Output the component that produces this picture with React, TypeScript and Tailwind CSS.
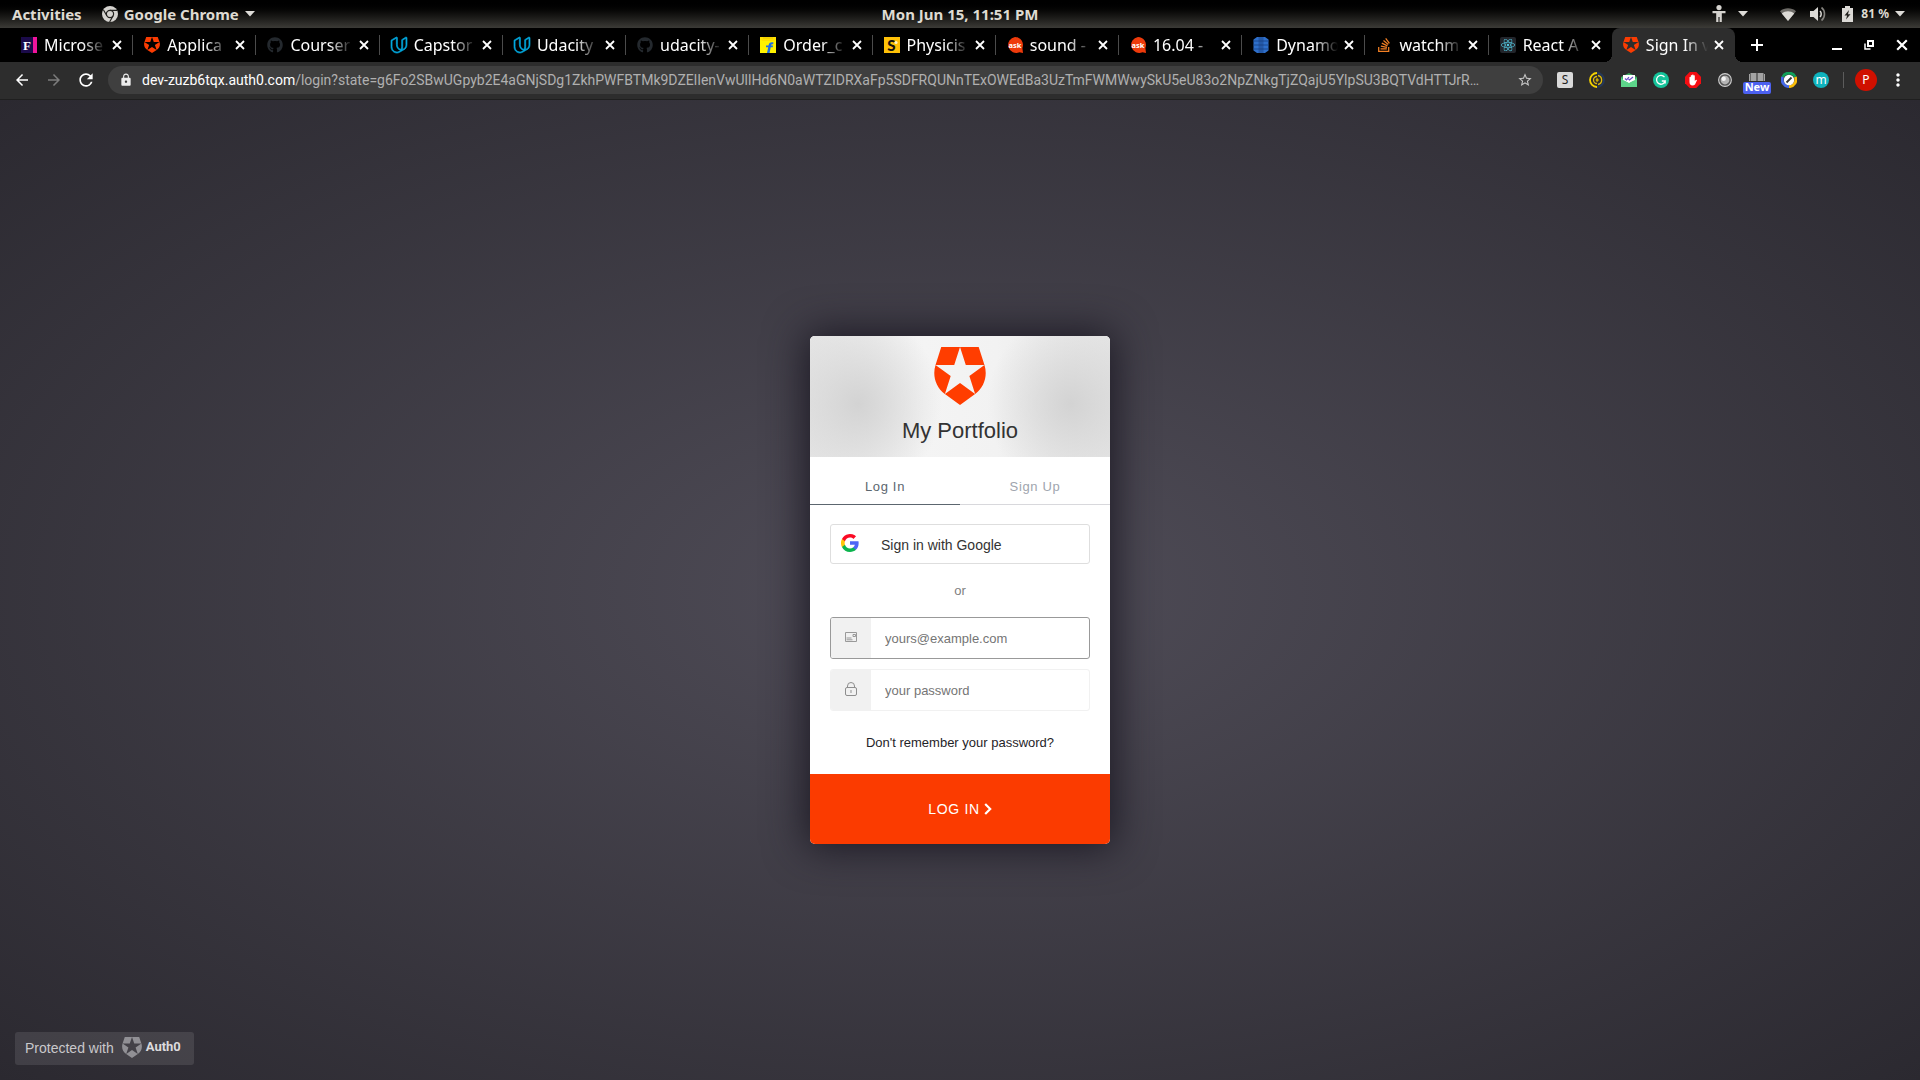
import React, { useState } from "react";
import { FaGithub, FaStackOverflow, FaReact } from "react-icons/fa";
import { SiUdacity } from "react-icons/si";
import { MdStarBorder, MdLock, MdArrowBack, MdArrowForward, MdRefresh, MdMoreVert } from "react-icons/md";

const AUTH0_PATH =
  "M21.98 7.448L19.62 0H4.347L2.02 7.448c-1.352 4.312.03 9.206 3.815 12.015L12.007 24l6.157-4.552c3.755-2.81 5.182-7.688 3.815-12.015l-6.16 4.58 2.343 7.45-6.157-4.597-6.158 4.58 2.358-7.433-6.188-4.55 7.63-.045L12.008 0l2.356 7.404 7.615.044z";

function Shield({ className }: { className?: string }) {
  return (
    <svg viewBox="1.4 0 21.2 24" preserveAspectRatio="none" className={className} aria-hidden="true">
      <path d={AUTH0_PATH} fill="currentColor" />
    </svg>
  );
}

function AskIcon() {
  return (
    <svg viewBox="0 0 16 16" className="size-4" aria-hidden="true">
      <path d="M8 0a8 8 0 1 0 4.500 15.200L16 16l-.6-5A8 8 0 0 0 8 0Z" fill="#ee3a0b" />
      <text x="8" y="10.500" textAnchor="middle" fontSize="7.500" fontWeight="700" fill="#fff" fontFamily="Noto Sans, sans-serif">ask</text>
    </svg>
  );
}

function MicrosetIcon() {
  return (
    <svg viewBox="0 0 16 16" className="size-4" aria-hidden="true">
      <rect width="12" height="16" fill="#1b0b4a" />
      <rect x="12" width="4" height="16" fill="#f0149b" />
      <text x="6" y="12.500" textAnchor="middle" fontSize="13" fontWeight="700" fill="#fff" fontFamily="Liberation Serif, serif">F</text>
    </svg>
  );
}

function FlipkartIcon() {
  return (
    <svg viewBox="0 0 16 16" className="size-4" aria-hidden="true">
      <rect width="16" height="16" fill="#fff200" />
      <path d="M0 0h16v2.500L13 4H3L0 2.500Z" fill="#ffe000" />
      <path d="M3 0.500h10v1H3z" fill="#e9c500" />
      <path d="M13.500 5.500c-3-.8-4.600.5-5 3H6v1.800h2.200L7 16h2.600l1.100-5.700h2l.4-1.800h-2c.2-1.100.8-1.500 2.100-1.200Z" fill="#1c6ee8" />
    </svg>
  );
}

function PhysicsIcon() {
  return (
    <svg viewBox="0 0 16 16" className="size-4" aria-hidden="true">
      <rect width="16" height="16" fill="#ffc107" />
      <text x="7.500" y="13.500" textAnchor="middle" fontSize="15" fontWeight="900" fill="#111" fontFamily="Lato, sans-serif">S</text>
      <circle cx="12" cy="5.500" r="1.600" fill="#fff3c4" />
    </svg>
  );
}

function DynamoIcon() {
  return (
    <svg viewBox="0 0 16 16" className="size-4" aria-hidden="true">
      <path d="M4 0h8l3.500 2.500v11L12 16H4L.5 13.500v-11Z" fill="#2e6fca" />
      <path d="M5.500 0h5v16h-5z" fill="#2459a8" />
      <path d="M0 4h16M0 8h16M0 12h16" stroke="#173f80" strokeWidth=".8" />
    </svg>
  );
}

function ChromeGlyph() {
  return (
    <svg viewBox="0 0 16 16" className="size-4" aria-hidden="true">
      <circle cx="8" cy="8" r="8" fill="#d5d3cf" />
      <circle cx="8" cy="8" r="3.600" fill="none" stroke="#22211e" strokeWidth="1.200" />
      <path d="M8 4.400h7M4.900 9.800 1.500 4M11.100 9.800 7.600 16" stroke="#22211e" strokeWidth="1.200" fill="none" />
    </svg>
  );
}

const tabs: { title: string; icon: React.ReactNode }[] = [
  { title: "Microse", icon: <MicrosetIcon /> },
  { title: "Applica", icon: <Shield className="h-4 w-4 text-[#fb3c02]" /> },
  { title: "Courser", icon: <FaGithub className="size-4 text-[#24292e]" /> },
  { title: "Capstor", icon: <SiUdacity className="size-4 overflow-visible stroke-[#02a9e0] stroke-1 text-[#02a9e0]" /> },
  { title: "Udacity", icon: <SiUdacity className="size-4 overflow-visible stroke-[#02a9e0] stroke-1 text-[#02a9e0]" /> },
  { title: "udacity-", icon: <FaGithub className="size-4 text-[#24292e]" /> },
  { title: "Order_c", icon: <FlipkartIcon /> },
  { title: "Physicis", icon: <PhysicsIcon /> },
  { title: "sound -", icon: <AskIcon /> },
  { title: "16.04 -", icon: <AskIcon /> },
  { title: "Dynamo", icon: <DynamoIcon /> },
  { title: "watchm", icon: <FaStackOverflow className="size-4 text-[#f48024]" /> },
  {
    title: "React A",
    icon: (
      <span className="flex size-4 items-center justify-center rounded-xs bg-[#22252b]">
        <FaReact className="size-3.5 text-[#53c5de]" />
      </span>
    ),
  },
  { title: "Sign In v", icon: <Shield className="h-4 w-4 text-[#fb3c02]" /> },
];

function Caret() {
  return (
    <svg viewBox="0 0 10 6" className="h-1.5 w-2.5" aria-hidden="true">
      <path d="M0 0h10L5 5.500Z" fill="#dedcd8" />
    </svg>
  );
}

function CloseGlyph({ className }: { className?: string }) {
  return (
    <svg viewBox="0 0 10 10" className={className} aria-hidden="true">
      <path d="m1 1 8 8M9 1 1 9" stroke="currentColor" strokeWidth="1.800" />
    </svg>
  );
}

function SystemBar() {
  return (
    <header className="grid h-7 grid-cols-3 items-center bg-gradient-to-b from-black to-[#3c3b37] text-[15px] leading-5 font-bold text-[#dfdbd2]">
      <div className="flex items-center pl-3">
        <button className="mr-5">Activities</button>
        <button className="flex items-center gap-1.5">
          <ChromeGlyph />
          Google Chrome
          <Caret />
        </button>
      </div>
      <time className="text-center">Mon Jun 15, 11:51 PM</time>
      <div className="flex items-center justify-end pr-[15px]">
        <button className="mr-8 flex items-center gap-3" aria-label="Accessibility">
          <svg viewBox="0 0 14 18" className="h-[18px] w-3.5" fill="#d5d3cf" aria-hidden="true">
            <circle cx="7" cy="2.600" r="2.600" />
            <path d="M0.500 6h13v2.200H9.800V17H7.600v-5H6.400v5H4.200V8.200H0.500Z" />
          </svg>
          <Caret />
        </button>
        <button className="flex items-center" aria-label="System menu">
          <svg viewBox="0 0 16 13" className="mr-3.5 h-[13px] w-4" aria-hidden="true">
            <path d="M8 13 0 3.200C4.500-.6 11.500-.6 16 3.200Z" fill="#6d6b67" />
            <path d="M8 13 1.800 5.400c3.500-2.800 8.900-2.800 12.400 0Z" fill="#dcdad6" />
          </svg>
          <svg viewBox="0 0 16 16" className="mr-4 size-4" fill="none" aria-hidden="true">
            <path d="M0 5h3.500L8 1v14l-4.500-4H0Z" fill="#dcdad6" />
            <path d="M10 5c1.600 1.600 1.600 4.400 0 6" stroke="#dcdad6" strokeWidth="1.500" />
            <path d="M11.500 1.500c4 3 4 10 0 13" stroke="#85837f" strokeWidth="1.600" />
          </svg>
          <svg viewBox="0 0 11 16" className="mr-2 h-4 w-[11px]" aria-hidden="true">
            <path d="M3 0h5v2h3v14H0V2h3Z" fill="#dcdad6" />
            <path d="M7 4 2.500 9.500h2.600L4 13.500l4.500-5.300H6Z" fill="#22211e" />
          </svg>
          <span className="mr-1.5 text-xs">81 %</span>
          <Caret />
        </button>
      </div>
    </header>
  );
}

function TabStrip() {
  const last = tabs.length - 1;
  return (
    <nav className="flex h-[34px] bg-black pl-2.5 text-white" aria-label="Open tabs">
      {tabs.map((tab, i) => (
        <div
          key={tab.title}
          className={
            i === last
              ? "relative flex min-w-0 flex-1 items-center gap-[7px] rounded-t-lg bg-[#2d2d2d] pl-[11px] pr-1"
              : "relative flex min-w-0 flex-1 items-center gap-[7px] pl-[11px] pr-1"
          }
        >
          <span className="shrink-0">{tab.icon}</span>
          <button className="min-w-0 flex-1 overflow-hidden text-left text-base whitespace-nowrap [mask-image:linear-gradient(to_right,black_62%,transparent_100%)]">
            {tab.title}
          </button>
          <button className="-ml-2 flex size-6 shrink-0 items-center justify-center" aria-label="Close tab">
            <CloseGlyph className="size-2.5" />
          </button>
          {i < last - 1 && <span className="absolute right-0 h-5 w-px bg-[#4b4b4b]" />}
          {i === last && (
            <>
              <span className="absolute bottom-0 -left-2 size-2 bg-[radial-gradient(circle_at_0_0,transparent_8px,#2d2d2d_8px)]" />
              <span className="absolute -right-2 bottom-0 size-2 bg-[radial-gradient(circle_at_100%_0,transparent_8px,#2d2d2d_8px)]" />
            </>
          )}
        </div>
      ))}
      <div className="flex w-[185px] items-center pr-3">
        <button className="ml-4 p-0" aria-label="New tab">
          <svg viewBox="0 0 12 12" className="size-3" stroke="#fff" strokeWidth="2" aria-hidden="true">
            <path d="M6 0v12M0 6h12" />
          </svg>
        </button>
        <button className="ml-auto" aria-label="Minimize">
          <svg viewBox="0 0 10 10" className="size-2.5" aria-hidden="true">
            <path d="M0 8h10v2H0z" fill="#fff" />
          </svg>
        </button>
        <button className="ml-[22px]" aria-label="Restore">
          <svg viewBox="0 0 10 10" className="size-2.5" fill="none" stroke="#fff" aria-hidden="true">
            <path d="M4 1h5v5H4z" strokeWidth="2" />
            <path d="M1 3.500V9h5.500" strokeWidth="1.500" />
          </svg>
        </button>
        <button className="ml-[22px]" aria-label="Close window">
          <CloseGlyph className="size-3" />
        </button>
      </div>
    </nav>
  );
}

const extensions: { name: string; icon: React.ReactNode }[] = [
  {
    name: "Scholar",
    icon: <span className="flex size-4 items-center justify-center rounded-xs bg-[#d9d9d9] text-xs text-[#222]">S</span>,
  },
  {
    name: "Circuit",
    icon: (
      <svg viewBox="0 0 16 16" className="size-4" fill="none" aria-hidden="true">
        <path d="M8 1a7 7 0 0 0 0 14" stroke="#f5d300" strokeWidth="1.800" />
        <path d="M8 1a7 7 0 0 1 0 14" stroke="#24385c" strokeWidth="1.800" />
        <path d="M8 4.500a3.500 3.500 0 0 0 0 7M9 3.500a4.600 4.600 0 0 1 0 9" stroke="#dcb911" strokeWidth="1.300" />
        <path d="m8 5.800 2 2.200-2 2.200L6.500 8Z" fill="#c9a800" />
      </svg>
    ),
  },
  {
    name: "Mail tracker",
    icon: (
      <svg viewBox="0 0 16 14" className="h-3.5 w-4" fill="none" aria-hidden="true">
        <path d="M0 4 8 0l8 4v10H0Z" fill="#3aa860" />
        <path d="M2 2h12v8H2z" fill="#fff" />
        <path d="m0 5 8 5 8-5v9H0Z" fill="#5dd58a" />
        <path d="M2 3.500h12V7L8 9.500 2 7Z" fill="#fff" />
        <path d="m4 5.500 1.500 1.500L8 4.200M7.500 6l1 1L12 4" stroke="#6a4fc8" strokeWidth="1.200" />
      </svg>
    ),
  },
  {
    name: "Grammar",
    icon: (
      <svg viewBox="0 0 16 16" className="size-4" fill="none" aria-hidden="true">
        <circle cx="8" cy="8" r="8" fill="#15c39a" />
        <path d="M11.500 5.200A4.400 4.400 0 1 0 12.200 9H8.800M12.200 8.600v3" stroke="#fff" strokeWidth="1.300" />
      </svg>
    ),
  },
  {
    name: "Ad blocker",
    icon: (
      <svg viewBox="0 0 16 16" className="size-4" aria-hidden="true">
        <path d="M4.700 0h6.600L16 4.700v6.600L11.300 16H4.700L0 11.300V4.700Z" fill="#f40d12" />
        <path d="M4.500 8V5.200q.7-.8 1.300 0V3.500q.7-.8 1.300 0V2.800q.8-.8 1.400 0v.8q.7-.8 1.300 0V9l1-1q1-.4 1.200.3L10 12.500Q9 13.500 7.500 13.500 4.500 13.300 4.500 10Z" fill="#fff" />
      </svg>
    ),
  },
  {
    name: "Recorder",
    icon: (
      <svg viewBox="0 0 16 16" className="size-3.5" aria-hidden="true">
        <circle cx="8" cy="8" r="7.300" fill="#555" stroke="#d0d0d0" strokeWidth="1.200" />
        <circle cx="8" cy="8" r="5" fill="#b5b5b5" />
        <circle cx="6.500" cy="6.500" r="2.500" fill="#f4f4f4" />
      </svg>
    ),
  },
  {
    name: "Dictionary",
    icon: (
      <span className="relative flex size-4 items-start justify-center">
        <svg viewBox="0 0 16 8" className="mt-px h-2 w-4" fill="#a3a3a3" aria-hidden="true">
          <path d="M0 1h1v7H0zM1.500 0h6v8h-6zM8.500 0h6v8h-6zM15 1h1v7h-1z" />
        </svg>
        <span className="absolute top-2.5 flex h-3 items-center rounded-xs bg-[#4c61f0] px-0.5 text-[11px] font-bold text-white">New</span>
      </span>
    ),
  },
  {
    name: "Color picker",
    icon: (
      <svg viewBox="0 0 16 16" className="size-4" fill="none" aria-hidden="true">
        <path d="M1.700 5A7 7 0 0 1 14.300 5" stroke="#10a05a" strokeWidth="2.800" />
        <path d="M14.300 5A7 7 0 0 1 8 14.700" stroke="#f9bd0a" strokeWidth="2.800" />
        <path d="M8 14.700A7 7 0 0 1 1.700 5" stroke="#4769e8" strokeWidth="2.800" />
        <circle cx="8" cy="8" r="5.200" fill="#fff" />
        <path d="m5.500 10.500 5-5" stroke="#333" strokeWidth="1.800" />
      </svg>
    ),
  },
  {
    name: "Mercury",
    icon: <span className="flex size-4 items-center justify-center rounded-full bg-[#0fb3bd] text-xs leading-none text-white">m</span>,
  },
];

function Toolbar() {
  const icon = "flex w-8 shrink-0 items-center justify-center";
  return (
    <div className="flex h-[38px] items-center border-b border-[#1f1f1f] bg-[#2d2d2d] px-1.5 pb-0.5 text-white">
      <button className={icon} aria-label="Back"><MdArrowBack className="size-[18px]" /></button>
      <button className={icon} aria-label="Forward"><MdArrowForward className="size-[18px] text-[#7c7c7c]" /></button>
      <button className={icon} aria-label="Reload"><MdRefresh className="size-5" /></button>
      <label className="mx-1.5 flex h-7 min-w-0 flex-1 items-center rounded-full bg-[#3f3f3f] pr-2.5 pl-[11px] font-['Roboto',sans-serif] text-sm">
        <MdLock className="mr-[9px] size-3.5 shrink-0 text-[#ececec]" />
        <span>dev-zuzb6tqx.auth0.com</span>
        <input
          aria-label="Address"
          readOnly
          className="min-w-0 flex-1 bg-transparent text-ellipsis text-[#b0b0b0] outline-none"
          value="/login?state=g6Fo2SBwUGpyb2E4aGNjSDg1ZkhPWFBTMk9DZElIenVwUllHd6N0aWTZIDRXaFp5SDFRQUNnTExOWEdBa3UzTmFWMWwySkU5eU83o2NpZNkgTjZQajU5YlpSU3BQTVdHTTJrR…"
        />
        <MdStarBorder className="ml-3 size-4 shrink-0 text-[#c8c8c8]" />
      </label>
      {extensions.map((e) => (
        <button key={e.name} className={icon} aria-label={e.name}>{e.icon}</button>
      ))}
      <span className="mx-1.5 h-4 w-px bg-[#5c5c5c]" />
      <button className={icon} aria-label="Profile">
        <span className="flex size-[22px] items-center justify-center rounded-full bg-[#d01000] text-xs">P</span>
      </button>
      <button className={icon} aria-label="Menu"><MdMoreVert className="size-5" /></button>
    </div>
  );
}

function GoogleG() {
  return (
    <svg viewBox="0 0 18 18" className="size-[18px]" aria-hidden="true">
      <path d="M17.640 9.200c0-.64-.06-1.250-.16-1.840H9v3.480h4.840a4.140 4.140 0 0 1-1.800 2.720v2.260h2.920c1.700-1.570 2.680-3.880 2.680-6.620Z" fill="#4f66f5" />
      <path d="M9 18c2.430 0 4.470-.8 5.960-2.180l-2.920-2.260c-.8.540-1.840.86-3.040.86-2.340 0-4.330-1.580-5.040-3.710H.96v2.330A9 9 0 0 0 9 18Z" fill="#0cb44e" />
      <path d="M3.960 10.710a5.400 5.400 0 0 1 0-3.420V4.960H.96a9 9 0 0 0 0 8.080l3-2.330Z" fill="#ffc60a" />
      <path d="M9 3.580c1.320 0 2.500.45 3.440 1.350l2.580-2.590A9 9 0 0 0 .96 4.960l3 2.330C4.670 5.160 6.660 3.580 9 3.580Z" fill="#fb0a24" />
    </svg>
  );
}

function LoginCard() {
  const [mode, setMode] = useState<"in" | "up">("in");
  const active = "border-b border-[#5c666f] pt-3 text-[#5c666f]";
  const idle = "border-b border-[#d8d8dc] pt-3 text-[#a0a5ae]";
  return (
    <form
      className="w-[300px] overflow-hidden rounded-[5px] bg-white font-['Liberation_Sans',sans-serif] shadow-[0_0_40px_4px_#1b1823]"
      onSubmit={(e) => e.preventDefault()}
    >
      <div className="flex flex-col items-center bg-[#f3f3f3] bg-[radial-gradient(ellipse_84px_90px_at_16%_56%,#d3d3d3,#d3d3d300),radial-gradient(ellipse_84px_90px_at_87%_56%,#d3d3d3,#d3d3d300),linear-gradient(to_right,#e6e6e6,#f4f4f4_38%,#f2f2f2_62%,#e6e6e6)] pt-[11px] pb-2.5">
        <Shield className="h-[58px] w-[52px] text-[#ff3d00]" />
        <h1 className="mt-2.5 text-[22px] leading-8 text-[#333]">My Portfolio</h1>
      </div>
      <div className="grid h-12 grid-cols-2 text-[13px] tracking-wider">
        <button type="button" className={mode === "in" ? active : idle} onClick={() => setMode("in")}>Log In</button>
        <button type="button" className={mode === "up" ? active : idle} onClick={() => setMode("up")}>Sign Up</button>
      </div>
      <div className="flex flex-col px-5 pt-[19px] text-[13px]">
        <button type="button" className="flex h-10 items-center rounded-[3px] border border-[#dedede] pt-0.5 pl-2.5 text-sm text-[#333]">
          <span className="mr-[22px] mb-1"><GoogleG /></span>
          Sign in with Google
        </button>
        <p className="mt-[17px] mb-4 text-center leading-5 text-[#808080]">or</p>
        <label className="flex h-[42px] overflow-hidden rounded-[3px] border border-[#999]">
          <span className="flex w-10 items-center justify-center bg-[#f1f1f1]">
            <svg viewBox="0 0 12 10" className="mb-0.5 h-2.5 w-3" fill="none" stroke="#999" aria-hidden="true">
              <path d="M.5.500h11v9H.5zM1.500 6h5M1.500 7.800h6" />
              <path d="M8 2.500h2.500v2H8z" />
            </svg>
          </span>
          <input type="email" aria-label="Email" placeholder="yours@example.com" className="min-w-0 flex-1 pt-0.5 pl-3.5 outline-none placeholder:text-[#757575]" />
        </label>
        <label className="mt-2.5 flex h-[42px] overflow-hidden rounded-[3px] border border-[#f1f1f1]">
          <span className="flex w-10 items-center justify-center bg-[#f1f1f1]">
            <svg viewBox="0 0 12 14" className="mb-0.5 h-3.5 w-3" fill="none" stroke="#8e8e8e" aria-hidden="true">
              <rect x=".5" y="5.500" width="11" height="8" rx="1.500" />
              <path d="M2.500 5.500V4a3.500 3.500 0 0 1 7 0v1.500" />
              <path d="M5.200 8h1.600v3H5.200z" fill="#b5b5b5" stroke="none" />
            </svg>
          </span>
          <input type="password" aria-label="Password" placeholder="your password" className="min-w-0 flex-1 pt-0.5 pl-3.5 outline-none placeholder:text-[#757575]" />
        </label>
        <a href="#reset" className="mt-[22px] mb-[21px] text-center leading-5 text-[#1f2428]">Don't remember your password?</a>
      </div>
      <button type="submit" className="flex h-[70px] w-full items-center justify-center bg-[#fb3b00] text-sm tracking-wider text-white">
        LOG IN
        <svg viewBox="0 0 8 12" className="ml-1 h-3 w-2" fill="none" stroke="#fff" strokeWidth="2.200" aria-hidden="true">
          <path d="m1.200 1 5 5-5 5" />
        </svg>
      </button>
    </form>
  );
}

export default function App() {
  return (
    <div className="flex min-h-screen flex-col font-['Noto_Sans',sans-serif]">
      <SystemBar />
      <TabStrip />
      <Toolbar />
      <main className="relative flex flex-1 items-center justify-center bg-[radial-gradient(#504d58,#2b2930)]">
        <LoginCard />
        <a
          href="#auth0"
          className="absolute bottom-[15px] left-[15px] flex h-[33px] items-center rounded-[3px] bg-white/10 pr-[13px] pb-0.5 pl-2.5 font-['Liberation_Sans',sans-serif] text-sm text-[#c9c8cb]"
        >
          Protected with
          <Shield className="mr-1 ml-2 h-[21px] w-5 text-[#919095]" />
          <span className="font-['Roboto',sans-serif] text-[13px] font-bold text-[#dcdbde]">Auth0</span>
        </a>
      </main>
    </div>
  );
}
